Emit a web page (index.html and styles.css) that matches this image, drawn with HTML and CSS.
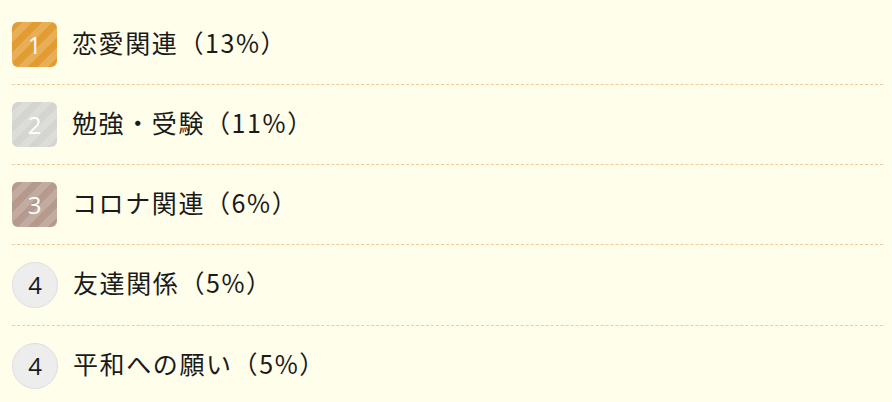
FILE: index.html
```html
<!DOCTYPE html>
<html lang="ja">
<head>
<meta charset="utf-8">
<link rel="stylesheet" href="styles.css">
</head>
<body>
<ul class="rank">
  <li class="row"><span class="badge gold">1</span><span class="label">恋愛関連（13%）</span></li>
  <li class="row"><span class="badge silver">2</span><span class="label">勉強・受験（11%）</span></li>
  <li class="row"><span class="badge bronze">3</span><span class="label">コロナ関連（6%）</span></li>
  <li class="row"><span class="badge plain">4</span><span class="label">友達関係（5%）</span></li>
  <li class="row"><span class="badge plain">4</span><span class="label">平和への願い（5%）</span></li>
</ul>
</body>
</html>
```

FILE: styles.css
```css
html, body {
  margin: 0;
  padding: 0;
  background: #fffeeb;
}
body {
  font-family: "Noto Sans CJK JP", "Noto Sans", sans-serif;
  color: #1a1a1a;
}
.rank {
  list-style: none;
  margin: 5px 9px 0 12px;
  padding: 0;
}
.row {
  display: flex;
  align-items: center;
  gap: 15px;
  padding: 17px 0;
  border-bottom: 1px dashed #eecb9c;
}
.row:last-child {
  border-bottom: none;
}
.badge {
  flex: none;
  width: 45px;
  height: 45px;
  border-radius: 6px;
  display: flex;
  align-items: center;
  justify-content: center;
  color: #fff;
  font-family: "Open Sans", "Noto Sans", sans-serif;
  font-size: 24px;
  line-height: 1;
  background-image: repeating-linear-gradient(-45deg, rgba(255,255,255,0) 0 7px, rgba(255,255,255,0.18) 7px 14px);
}
.gold { background-color: #e29d32; }
.silver { background-color: #d5d5d0; }
.bronze { background-color: #b59a8d; }
.plain {
  box-sizing: border-box;
  width: 46px;
  height: 46px;
  border-radius: 50%;
  background: #ededed;
  border: 1px solid #dedede;
  color: #1a1a1a;
}
.label {
  font-size: 25px;
  line-height: 1;
  letter-spacing: 1.6px;
  margin-top: -5px;
}
```
